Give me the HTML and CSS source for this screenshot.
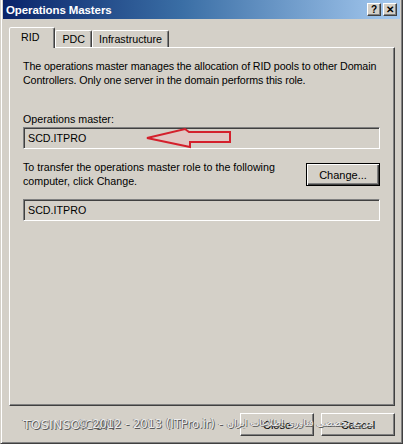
FILE: index.html
```html
<!DOCTYPE html>
<html>
<head>
<meta charset="utf-8">
<link rel="stylesheet" href="styles.css">
</head>
<body>
<div class="window">
  <div class="titlebar">
    <span class="title">Operations Masters</span>
    <div class="tbtns">
      <span class="tbtn">?</span>
      <span class="tbtn">✕</span>
    </div>
  </div>
  <div class="client">
    <div class="tabs">
      <div class="tab active">RID</div>
      <div class="tab">PDC</div>
      <div class="tab">Infrastructure</div>
    </div>
    <div class="panel">
      <p class="para">The operations master manages the allocation of RID pools to other Domain Controllers. Only one server in the domain performs this role.</p>
      <div class="label">Operations master:</div>
      <div class="field">
        SCD.ITPRO
        <svg class="arrow" width="220" height="24" viewBox="0 0 220 24">
          <path d="M123 11 L161 2 L165 5 L206 5 L206 15 L166 15 L166 20 Z" fill="rgba(240,190,190,0.45)" stroke="#d4202c" stroke-width="2" stroke-linejoin="miter"/>
        </svg>
      </div>
      <div class="transfer">
        <p class="ttext">To transfer the operations master role to the following computer, click Change.</p>
        <button class="btn default">Change...</button>
      </div>
      <div class="field field2">SCD.ITPRO</div>
    </div>
    <div class="bottom">
      <button class="btn">Close</button>
      <button class="btn">Cancel</button>
      <span class="wm wm1">TOSINSO.COM</span>
      <span class="wm wm2">© 2012 - 2013 (ITPro.ir) -</span>
      <span class="wm wm3" dir="rtl">مرجع تخصصی فناوری اطلاعات ایران</span>
    </div>
  </div>
</div>
</body>
</html>
```

FILE: styles.css
```css
html, body {
  margin: 0;
  padding: 0;
  background: #ffffff;
}

body {
  font-family: "Liberation Sans", Arial, sans-serif;
  font-size: 11px;
  color: #000;
}

.window {
  width: 403px;
  height: 444px;
  box-sizing: border-box;
  background: #d4d0c8;
  border-left: 1px solid #d4d0c8;
  border-right: 1px solid #404040;
  border-bottom: 1px solid #404040;
  box-shadow: inset 1px 0 #ffffff, inset -1px -1px #808080;
  padding: 0 2px 2px 2px;
  display: flex;
  flex-direction: column;
}

.titlebar {
  height: 19px;
  background: linear-gradient(to right, #0a246a 0%, #3a6ea5 45%, #a6caf0 100%);
  display: flex;
  align-items: center;
  justify-content: space-between;
  padding: 0 3px 0 3px;
  flex-shrink: 0;
}

.title {
  color: #fff;
  font-weight: bold;
  font-size: 11.5px;
  letter-spacing: -0.1px;
}

.tbtns {
  display: flex;
  gap: 2px;
}

.tbtn {
  width: 14px;
  height: 13px;
  box-sizing: border-box;
  background: #d4d0c8;
  border: 1px solid;
  border-color: #fff #404040 #404040 #fff;
  box-shadow: inset -1px -1px #808080;
  font-size: 10px;
  font-weight: bold;
  line-height: 11px;
  text-align: center;
  color: #000;
}

.client {
  flex: 1;
  display: flex;
  flex-direction: column;
  padding: 8px 4px 0 6px;
}

.tabs {
  display: flex;
  align-items: flex-end;
  height: 20px;
  position: relative;
  z-index: 2;
}

.tab {
  height: 17px;
  box-sizing: border-box;
  padding: 0 6px;
  border: 1px solid;
  border-bottom: none;
  border-color: #fff #404040 transparent #fff;
  box-shadow: inset -1px 0 #808080;
  border-radius: 2px 2px 0 0;
  line-height: 17px;
  font-size: 10.7px;
}

.tab.active {
  height: 21px;
  margin-bottom: -1px;
  padding: 0 15px 0 11px;
  background: #d4d0c8;
  line-height: 18px;
}

.panel {
  width: 386px;
  height: 359px;
  box-sizing: border-box;
  border: 1px solid;
  border-color: #fff #404040 #404040 #fff;
  box-shadow: inset -1px -1px #808080;
  padding: 11px 12px 0 13px;
  font-size: 10.7px;
}

.para {
  margin: 0;
  line-height: 14px;
  letter-spacing: -0.1px;
}

.label {
  margin-top: 25px;
  line-height: 14px;
}

.field {
  position: relative;
  margin-top: 1px;
  margin-right: 2px;
  height: 22px;
  box-sizing: border-box;
  border: 1px solid;
  border-color: #808080 #fff #fff #808080;
  box-shadow: inset 1px 1px #404040;
  padding-left: 4px;
  line-height: 20px;
}

.arrow {
  position: absolute;
  left: 0;
  top: -1px;
}

.transfer {
  margin-top: 11px;
  margin-right: 2px;
  display: flex;
  justify-content: space-between;
  align-items: flex-start;
}

.ttext {
  margin: 0;
  width: 270px;
  line-height: 14px;
}

.btn {
  width: 74px;
  height: 23px;
  box-sizing: border-box;
  background: #d4d0c8;
  border: 1px solid;
  border-color: #fff #404040 #404040 #fff;
  box-shadow: inset -1px -1px #808080;
  font-family: "Liberation Sans", Arial, sans-serif;
  font-size: 11px;
  color: #000;
  padding: 0;
}

.btn.default {
  margin-top: 3px;
  border: 1px solid #000;
  box-shadow: inset 1px 1px #fff, inset -1px -1px #404040, inset -2px -2px #808080;
}

.field2 {
  margin-top: 11px;
}

.bottom {
  position: relative;
  display: flex;
  justify-content: flex-end;
  gap: 7px;
  padding: 7px 6px 0 0;
  width: 392px;
  box-sizing: border-box;
}

.wm {
  position: absolute;
  top: 11px;
  font-family: "DejaVu Sans", sans-serif;
  color: #ececec;
  text-shadow: 1px 1px 0 #5a5a5a, -1px 0 0 #8a8a8a;
  white-space: nowrap;
}

.wm1 {
  left: 14px;
  font-size: 12.5px;
  letter-spacing: 0.2px;
}

.wm2 {
  left: 68px;
  font-size: 11.5px;
}

.wm3 {
  left: 218px;
  top: 11px;
  font-size: 9.5px;
}
```
